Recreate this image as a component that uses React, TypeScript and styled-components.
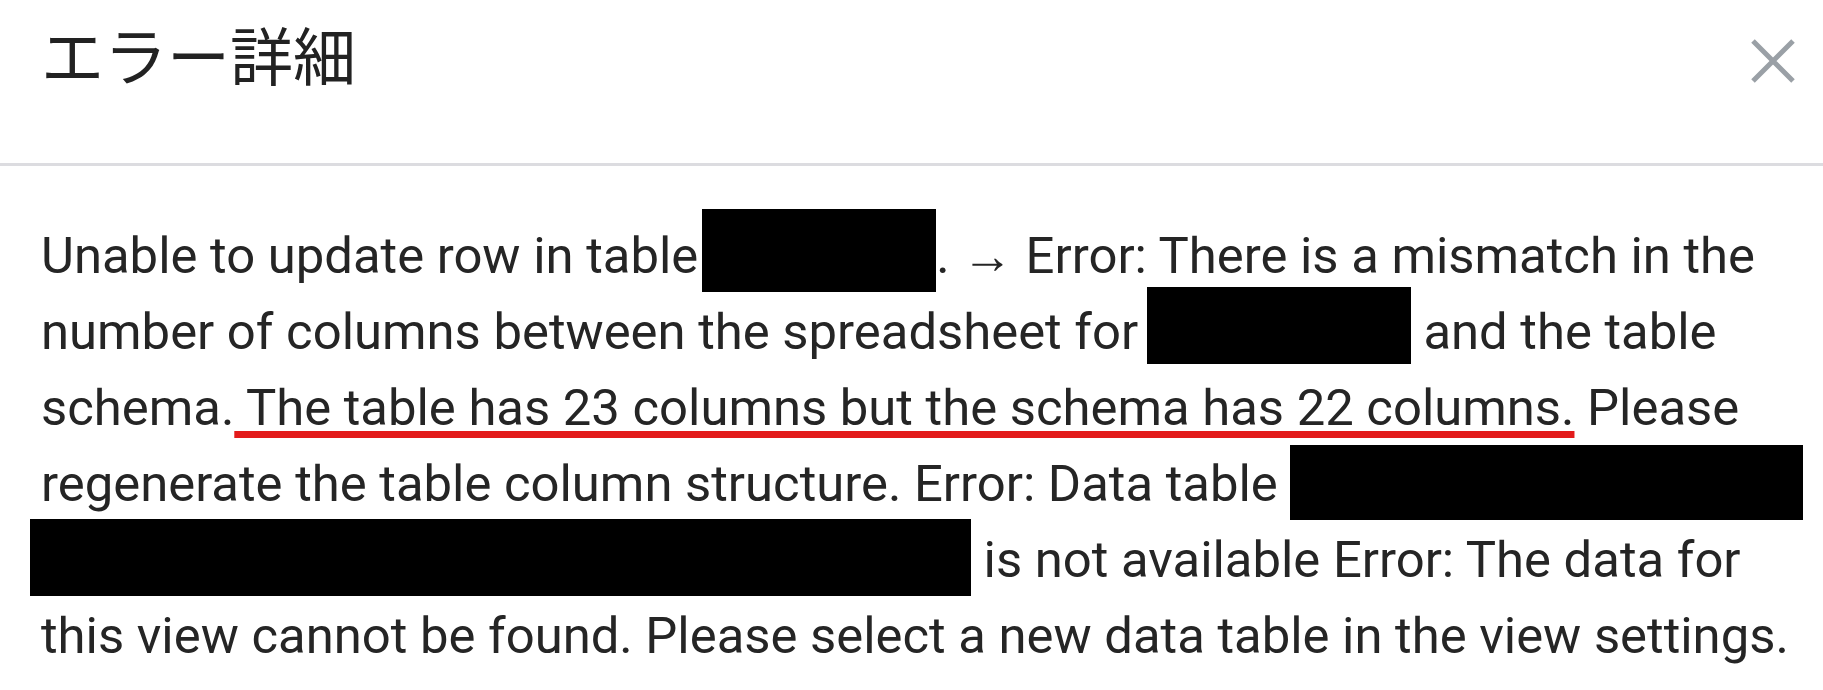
import * as React from 'react';
import styled, {createGlobalStyle} from 'styled-components';

const GlobalStyle = createGlobalStyle`
  html, body {
    margin: 0;
    padding: 0;
    background: #ffffff;
    overflow: hidden;
  }
`;

const Dialog = styled.div`
  display: flex;
  flex-direction: column;
  width: 1823px;
  height: 690px;
  box-sizing: border-box;
  background: #ffffff;
`;

const Header = styled.div`
  display: flex;
  flex-direction: row;
  justify-content: space-between;
  align-items: center;
  flex-shrink: 0;
  height: 166px;
  box-sizing: border-box;
  padding: 0 27px 48px 41px;
  border-bottom: 3px solid #dcdce0;
`;

const Title = styled.h2`
  margin: 0 0 10px;
  font-family: 'Noto Sans CJK JP', 'Noto Sans', sans-serif;
  font-weight: 400;
  font-size: 63px;
  line-height: 1;
  color: #222222;
`;

const CloseButton = styled.button`
  display: flex;
  align-items: center;
  justify-content: center;
  width: 46px;
  height: 46px;
  margin-top: 7px;
  padding: 0;
  border: none;
  background: transparent;
  cursor: pointer;
`;

const Body = styled.div`
  flex: 1;
  box-sizing: border-box;
  padding: 52px 8px 0 41px;
`;

const Message = styled.p`
  margin: 0;
  font-family: Roboto, 'Liberation Sans', sans-serif;
  font-size: 50.8px;
  line-height: 76px;
  color: #252525;
`;

const Highlight = styled.span`
  text-decoration: underline;
  text-decoration-color: #e31b1b;
  text-decoration-thickness: 7px;
  text-underline-offset: 6px;
`;

interface RedactionProps {
  $w: number;
  $h: number;
  $drop: number;
  $ml?: number;
}

const Redaction = styled.span<RedactionProps>`
  display: inline-block;
  width: ${p => p.$w}px;
  height: ${p => p.$h}px;
  background: #000000;
  vertical-align: baseline;
  margin-top: ${p => -(p.$h - p.$drop - 50)}px;
  margin-bottom: ${p => -p.$drop}px;
  margin-left: ${p => p.$ml ?? 0}px;
`;

const CloseIcon = () => (
  <svg width="46" height="46" viewBox="0 0 46 46" fill="none">
    <path d="M3 3 L43 43 M43 3 L3 43" stroke="#9aa0a6" strokeWidth="5" />
  </svg>
);

export default function App() {
  return (
    <>
      <GlobalStyle />
      <Dialog>
        <Header>
          <Title>エラー詳細</Title>
          <CloseButton aria-label="close">
            <CloseIcon />
          </CloseButton>
        </Header>
        <Body>
          <Message>
            Unable to update row in table
            <Redaction $w={234} $h={83} $drop={19} $ml={4} />. → Error: There is a
            mismatch in the number of columns between the spreadsheet for{' '}
            <Redaction $w={264} $h={77} $drop={15} $ml={-4} /> and the table schema.
            <Highlight> The table has 23 columns but the schema has 22 columns.</Highlight>{' '}
            Please regenerate the table column structure. Error: Data table{' '}
            <Redaction $w={513} $h={75} $drop={19} />{' '}
            <Redaction $w={941} $h={77} $drop={19} $ml={-11} /> is not available
            Error: The data for this view cannot be found. Please select a new data
            table in the view settings.
          </Message>
        </Body>
      </Dialog>
    </>
  );
}
